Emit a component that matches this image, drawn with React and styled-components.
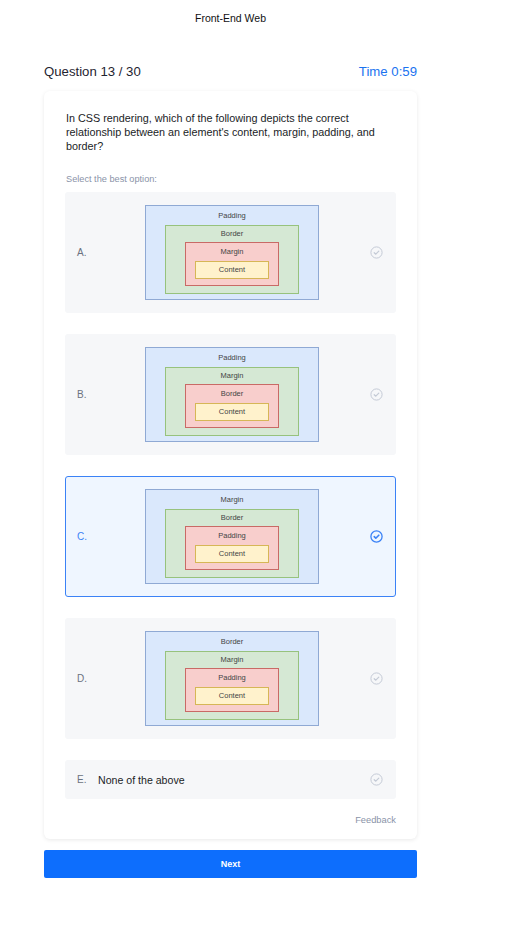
import React from "react";
import styled, { createGlobalStyle } from "styled-components";

const Global = createGlobalStyle`
  html, body { margin: 0; padding: 0; background: #fff; }
  body { font-family: "Liberation Sans", Arial, sans-serif; color: #1f2430; }
`;

const Page = styled.div`
  width: 373px;
  margin-left: 44px;
  padding-bottom: 40px;
`;

const Header = styled.div`
  height: 36px;
  line-height: 36px;
  text-align: center;
  font-size: 10.5px;
  color: #111;
`;

const QuestionRow = styled.div`
  margin-top: 26px;
  height: 18px;
  display: flex;
  justify-content: space-between;
  align-items: center;
  font-size: 13.2px;
`;

const Counter = styled.span`
  color: #1f2430;
`;

const Timer = styled.span`
  color: #1a73f0;
`;

const Card = styled.div`
  margin-top: 11px;
  background: #fff;
  border-radius: 6px;
  box-shadow: 0 1px 4px rgba(0, 0, 0, 0.09);
  padding: 20px 21px 13px;
`;

const QuestionText = styled.p`
  margin: 0;
  padding: 0 10px 0 1px;
  font-size: 10.8px;
  line-height: 14px;
  color: #1a1d26;
`;

const Hint = styled.div`
  margin-top: 20px;
  padding-left: 1px;
  font-size: 9.2px;
  line-height: 12px;
  color: #8a93a8;
`;

const Options = styled.div`
  margin-top: 7px;
  display: flex;
  flex-direction: column;
  gap: 21px;
`;

const Option = styled.div`
  height: ${(p) => (p.$compact ? 39 : 121)}px;
  box-sizing: border-box;
  border-radius: 3px;
  background: ${(p) => (p.$selected ? "#eff6ff" : "#f6f7f9")};
  border: 1px solid ${(p) => (p.$selected ? "#3b82f6" : "transparent")};
  display: grid;
  grid-template-columns: ${(p) => (p.$compact ? "auto 1fr auto" : "1fr auto 1fr")};
  align-items: center;
  padding: 0 12px 0 11px;
`;

const Letter = styled.span`
  font-size: 10px;
  color: ${(p) => (p.$selected ? "#3b82f6" : "#6b7280")};
  width: ${(p) => (p.$compact ? "21px" : "auto")};
`;

const OptionText = styled.span`
  font-size: 10.6px;
  color: #1a1d26;
`;

const CheckWrap = styled.span`
  justify-self: end;
  display: flex;
  width: 13px;
  height: 13px;
`;

const Box = styled.div`
  box-sizing: border-box;
  background: ${(p) => p.$bg};
  border: 1px solid ${(p) => p.$border};
  display: flex;
  flex-direction: column;
  align-items: stretch;
  padding: ${(p) => p.$pad};
  width: ${(p) => p.$w || "auto"};
`;

const BoxLabel = styled.div`
  height: ${(p) => p.$h}px;
  display: flex;
  align-items: center;
  justify-content: center;
  font-size: 7.5px;
  color: #444;
`;

const Content = styled.div`
  box-sizing: border-box;
  height: 18px;
  background: #fff2cc;
  border: 1px solid #d6b656;
  display: flex;
  align-items: center;
  justify-content: center;
  font-size: 7.5px;
  color: #444;
`;

const Diagram = styled.div`
  margin: -1px 0 0 4px;
`;

const Footer = styled.div`
  margin-top: 15px;
  text-align: right;
  font-size: 9.3px;
  line-height: 12px;
  color: #8a93a8;
`;

const NextButton = styled.button`
  margin-top: 11px;
  width: 100%;
  height: 28px;
  border: none;
  border-radius: 2px;
  background: #0d6efd;
  color: #fff;
  font-family: "Liberation Sans", Arial, sans-serif;
  font-weight: bold;
  font-size: 9px;
`;

const Check = ({ selected }) => (
  <svg width="13" height="13" viewBox="0 0 13 13">
    <circle
      cx="6.5"
      cy="6.5"
      r="5.6"
      fill="none"
      stroke={selected ? "#3b82f6" : "#c4cad6"}
      strokeWidth={selected ? 1.3 : 1}
    />
    <path
      d="M4.2 6.7 L5.8 8.2 L8.8 5.2"
      fill="none"
      stroke={selected ? "#3b82f6" : "#c4cad6"}
      strokeWidth={selected ? 1.6 : 1.2}
      strokeLinecap="round"
      strokeLinejoin="round"
    />
  </svg>
);

const BoxDiagram = ({ labels }) => (
  <Diagram>
    <Box $bg="#dae8fc" $border="#8fa9d4" $pad="0 19px 5px" $w="174px">
      <BoxLabel $h={19}>{labels[0]}</BoxLabel>
      <Box $bg="#d5e8d4" $border="#97c27d" $pad="0 19px 7px">
        <BoxLabel $h={16}>{labels[1]}</BoxLabel>
        <Box $bg="#f8cecc" $border="#c96a66" $pad="0 9px 6px">
          <BoxLabel $h={18}>{labels[2]}</BoxLabel>
          <Content>Content</Content>
        </Box>
      </Box>
    </Box>
  </Diagram>
);

const options = [
  { letter: "A.", labels: ["Padding", "Border", "Margin"] },
  { letter: "B.", labels: ["Padding", "Margin", "Border"] },
  { letter: "C.", labels: ["Margin", "Border", "Padding"], selected: true },
  { letter: "D.", labels: ["Border", "Margin", "Padding"] },
];

export default function App() {
  return (
    <>
      <Global />
      <Page>
        <Header>Front-End Web</Header>
        <QuestionRow>
          <Counter>Question 13 / 30</Counter>
          <Timer>Time 0:59</Timer>
        </QuestionRow>
        <Card>
          <QuestionText>
            In CSS rendering, which of the following depicts the correct
            relationship between an element's content, margin, padding, and
            border?
          </QuestionText>
          <Hint>Select the best option:</Hint>
          <Options>
            {options.map((o) => (
              <Option key={o.letter} $selected={o.selected}>
                <Letter $selected={o.selected}>{o.letter}</Letter>
                <BoxDiagram labels={o.labels} />
                <CheckWrap>
                  <Check selected={o.selected} />
                </CheckWrap>
              </Option>
            ))}
            <Option $compact>
              <Letter $compact>E.</Letter>
              <OptionText>None of the above</OptionText>
              <CheckWrap>
                <Check />
              </CheckWrap>
            </Option>
          </Options>
          <Footer>Feedback</Footer>
        </Card>
        <NextButton>Next</NextButton>
      </Page>
    </>
  );
}
